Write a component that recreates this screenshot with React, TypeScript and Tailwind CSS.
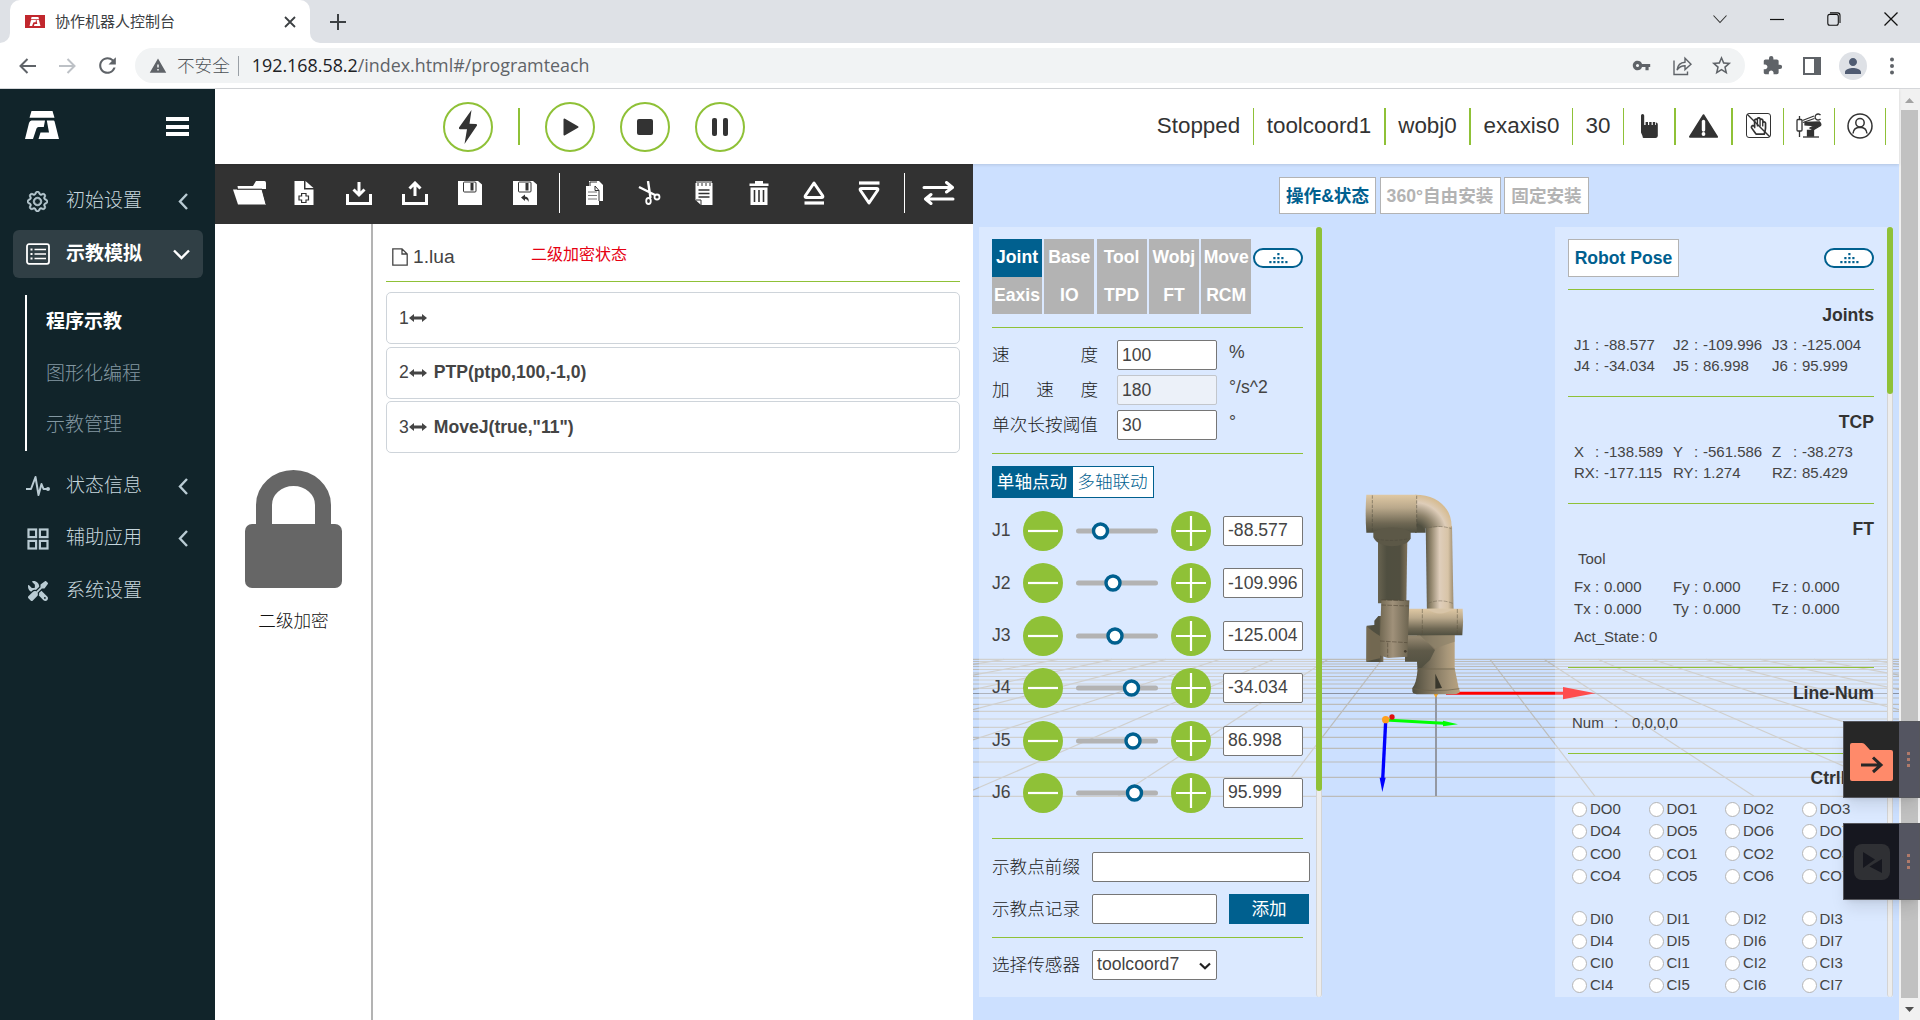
import React from "react";
import { MdVpnKey, MdStarBorder, MdExtension, MdPerson, MdWarning, MdRefresh } from "react-icons/md";
import { BsGear } from "react-icons/bs";
import { FaScrewdriverWrench } from "react-icons/fa6";
import { FaRegHandPaper } from "react-icons/fa";

const GREEN = "#8fc137";

function Logo({ className }: { className?: string }) {
  return (
    <svg viewBox="0 0 34 28" className={className} fill="currentColor">
      <path d="M6.5 0H27.5L29.500 6.800H4.500Z" />
      <path d="M6.500 9.500H20L18.800 16H13.500Q12 16 11.500 17.500L8 28H0L4 12Q4.800 9.500 6.500 9.500Z" />
      <path d="M21.800 9.500H28.500Q29.300 9.500 29.600 10.500L34 28H13.500L15.500 21.500H24Z" />
    </svg>
  );
}

function BrowserChrome() {
  return (
    <div className="h-[89px] w-full shrink-0 border-b border-[#d5d7da] bg-white">
      <div className="flex h-[43px] bg-[#dee1e6]">
        <div className="flex w-[10px] items-end bg-white">
          <div className="h-[43px] w-[10px] rounded-br-[10px] bg-[#dee1e6]" />
        </div>
        <div className="w-[300px] bg-[#dee1e6]">
          <div className="flex h-[43px] items-center rounded-t-[10px] bg-white pl-[15px] pr-[14px]">
            <div className="flex h-[13px] w-5 items-center justify-center bg-[#c1272d]">
              <Logo className="h-[9px] w-3 text-white" />
            </div>
            <span className="ml-[10px] flex-1 pt-[2px] text-[15px] text-[#3c4043]">协作机器人控制台</span>
            <svg className="h-3 w-3" viewBox="0 0 12 12" stroke="#3c4043" strokeWidth="1.8">
              <path d="M1 1L11 11M11 1L1 11" />
            </svg>
          </div>
        </div>
        <div className="flex flex-1 bg-white">
          <div className="flex h-[43px] flex-1 items-center justify-between rounded-bl-[10px] bg-[#dee1e6] pl-5 pr-[22px]">
            <svg className="h-4 w-4" viewBox="0 0 16 16" stroke="#3c4043" strokeWidth="2">
              <path d="M8 0V16M0 8H16" />
            </svg>
            <div className="flex items-center gap-[43px] pb-[6px]">
              <svg className="h-[14px] w-[14px]" viewBox="0 0 14 14" fill="none" stroke="#333" strokeWidth="1.1">
                <path d="M.5 3.5L7 10.5L13.5 3.5" />
              </svg>
              <svg className="h-[14px] w-[14px]" viewBox="0 0 14 14" stroke="#111" strokeWidth="1.2">
                <path d="M0 7.5H14" />
              </svg>
              <svg className="h-[14px] w-[14px]" viewBox="0 0 14 14" fill="none" stroke="#111" strokeWidth="1.1">
                <rect x=".8" y="2.4" width="10.5" height="10.8" rx="2" />
                <path d="M3 .9H10.6Q13 .9 13 3.4V11" />
              </svg>
              <svg className="h-[14px] w-[14px]" viewBox="0 0 14 14" stroke="#111" strokeWidth="1.3">
                <path d="M.5 .5L13.5 13.5M13.5 .5L.5 13.5" />
              </svg>
            </div>
          </div>
        </div>
      </div>
      <div className="flex h-[45px] items-center">
        <div className="flex w-[135px] items-center pl-[19px]">
          <svg className="h-4 w-[17px]" viewBox="0 0 17 16" fill="none" stroke="#5f6368" strokeWidth="2">
            <path d="M17 8H2M8.5 1L1.5 8L8.5 15" />
          </svg>
          <svg className="ml-[23px] h-4 w-[17px]" viewBox="0 0 17 16" fill="none" stroke="#bdc1c6" strokeWidth="2">
            <path d="M0 8H15M8.5 1L15.5 8L8.5 15" />
          </svg>
          <MdRefresh className="ml-[19px] h-[25px] w-[25px] text-[#5f6368]" />
        </div>
        <div className="flex h-[35px] w-[1610px] items-center rounded-full bg-[#f1f3f4] pl-[14px] pr-3 text-[#5f6368]">
          <MdWarning className="h-[18px] w-[18px]" />
          <span className="ml-[10px] pt-px text-[17.6px] font-light text-[#4d5156]">不安全</span>
          <span className="ml-2 h-5 w-px bg-[#9aa0a6]" />
          <span className="ml-[13px] flex-1 font-['Open_Sans'] text-[17.86px] text-[#5f6368]">
            <span className="text-[#202124]">192.168.58.2</span>/index.html#/programteach
          </span>
          <MdVpnKey className="h-[19px] w-[19px]" />
          <svg className="ml-[21px] h-5 w-5" viewBox="0 0 20 20" fill="none" stroke="currentColor" strokeWidth="1.4">
            <path d="M2 4.5V18.5H15.5V15.5" />
            <path d="M5 14Q6 6.5 13 6.2V2.2L19 8.2L13 13.6V9.8Q8 9.8 5 14Z" />
          </svg>
          <MdStarBorder className="ml-[18px] h-[23px] w-[23px]" />
        </div>
        <div className="ml-[17px] flex items-center text-[#5f6368]">
          <MdExtension className="h-[21px] w-[21px]" />
          <svg className="ml-5 h-[18px] w-[18px]" viewBox="0 0 18 18" fill="none" stroke="currentColor" strokeWidth="2">
            <rect x="1" y="1" width="16" height="16" />
            <rect x="12" y="1" width="5" height="16" fill="currentColor" />
          </svg>
          <div className="ml-[18px] flex h-7 w-7 items-center justify-center rounded-full bg-[#dee1e6] text-[#4f5b72]">
            <MdPerson className="h-6 w-6" />
          </div>
          <svg className="ml-[23px] h-[18px] w-1" viewBox="0 0 4 18" fill="currentColor">
            <circle cx="2" cy="2.5" r="2" />
            <circle cx="2" cy="9" r="2" />
            <circle cx="2" cy="15.5" r="2" />
          </svg>
        </div>
      </div>
    </div>
  );
}

function Chevron({ open = false }: { open?: boolean }) {
  return open ? (
    <svg className="h-[11px] w-[17px]" viewBox="0 0 17 11" fill="none" stroke="#fff" strokeWidth="2.4">
      <path d="M1 1.5L8.5 9L16 1.5" />
    </svg>
  ) : (
    <svg className="mr-[3px] h-[17px] w-[10px]" viewBox="0 0 10 17" fill="none" stroke="#b9cbd3" strokeWidth="2.4">
      <path d="M9 1L2 8.5L9 16" />
    </svg>
  );
}

function NavRow({ icon, label, chevron = true }: { icon: React.ReactNode; label: string; chevron?: boolean }) {
  return (
    <div className="flex h-12 items-center pl-[13px] pr-[12px] text-[#b9cbd3]">
      <span className="flex w-[24px] justify-center">{icon}</span>
      <span className="ml-[16px] flex-1 text-[19px] font-light text-[#c6d6dd]">{label}</span>
      {chevron && <Chevron />}
    </div>
  );
}

function Sidebar() {
  return (
    <aside className="w-[215px] shrink-0 bg-[#11242a] pl-[13px] pr-3">
      <div className="flex h-[75px] items-center justify-between pl-3 pr-[14px] text-white">
        <Logo className="mb-[3px] h-7 w-[34px]" />
        <div className="flex h-[19px] w-[23px] flex-col justify-between">
          <span className="h-1 bg-white" />
          <span className="h-1 bg-white" />
          <span className="h-1 bg-white" />
        </div>
      </div>
      <div className="mt-[13px]">
        <NavRow icon={<BsGear className="mr-[2px] h-[21px] w-[21px]" strokeWidth={0.6} />} label="初始设置" />
      </div>
      <div className="mt-[5px] flex h-12 items-center rounded-[6px] bg-[#303f45] pl-[13px] pr-[13px] text-white">
        <svg className="h-[22px] w-6" viewBox="0 0 24 22" fill="none" stroke="#fff" strokeWidth="1.8">
          <rect x="1" y="1.2" width="22" height="19.6" rx="2" />
          <path d="M8.5 6.5H20M8.5 11H20M8.5 15.5H20" strokeWidth="1.4" />
          <path d="M4.5 6.5H6.5M4.5 11H6.5M4.5 15.5H6.5" strokeWidth="2" />
        </svg>
        <span className="ml-[16px] flex-1 pt-px text-[19px] font-bold">示教模拟</span>
        <Chevron open />
      </div>
      <div className="ml-3 mt-[17px] flex h-[156px] flex-col border-l-2 border-white pl-[19px] pt-[2px] text-[19px] font-light text-[#8398a2]">
        <span className="flex h-[51px] items-center font-bold text-white">程序示教</span>
        <span className="flex h-[52px] items-center">图形化编程</span>
        <span className="flex h-[51px] items-center">示教管理</span>
      </div>
      <div className="mt-[11px] flex flex-col gap-[4.5px]">
        <NavRow
          icon={
            <svg className="h-[22px] w-6" viewBox="0 0 24 22" fill="none" stroke="currentColor" strokeWidth="2">
              <path d="M0 14H5L9.5 2L12.5 20L15.5 9L17.5 14H21" strokeLinejoin="round" />
              <circle cx="22" cy="14" r="1" />
            </svg>
          }
          label="状态信息"
        />
        <NavRow
          icon={
            <svg className="h-[22px] w-[22px]" viewBox="0 0 22 22" fill="none" stroke="currentColor" strokeWidth="2.2">
              <rect x="1.5" y="1.5" width="7.6" height="7.6" />
              <rect x="12.9" y="1.5" width="7.6" height="7.6" />
              <rect x="1.5" y="12.9" width="7.6" height="7.6" />
              <rect x="12.9" y="12.9" width="7.6" height="7.6" />
            </svg>
          }
          label="辅助应用"
        />
        <NavRow
          icon={<FaScrewdriverWrench className="h-[20px] w-[20px] -scale-x-100" />}
          label="系统设置"
          chevron={false}
        />
      </div>
    </aside>
  );
}

function RoundButton({ children }: { children: React.ReactNode }) {
  return (
    <div className="flex h-[50px] w-[50px] items-center justify-center rounded-full border-2 border-[#8fc137]">
      {children}
    </div>
  );
}

function StatusCell({ width, wide = false, children }: { width: string; wide?: boolean; children: React.ReactNode }) {
  return (
    <div
      className={`${width} flex h-[37px] shrink-0 items-center justify-center border-[#8fc137] pb-[2px] ${wide ? "border-r-2" : "border-r"}`}
    >
      {children}
    </div>
  );
}

function TopBar() {
  return (
    <header className="z-10 flex h-[75px] shrink-0 items-center justify-between bg-white pl-[228px] pr-[13px] shadow-[0_1px_3px_rgba(0,0,0,0.12)]">
      <div className="flex items-center">
        <RoundButton>
          <svg className="h-[34px] w-5" viewBox="0 0 20 34" fill="#333">
            <path d="M13.5 0L1 17.5Q.5 19 2 19.2L9 19.3L6.5 34L19 15.5Q19.5 14.2 18 14L11.5 13.8Z" />
          </svg>
        </RoundButton>
        <span className="ml-[25px] mr-[25px] h-[37px] w-[2px] bg-[#8fc137]" />
        <RoundButton>
          <svg className="ml-[2px] h-[18px] w-4" viewBox="0 0 16 18" fill="#333" stroke="#333" strokeWidth="2" strokeLinejoin="round">
            <path d="M1.5 1.5L14.5 9L1.5 16.5Z" />
          </svg>
        </RoundButton>
        <div className="ml-[25px]">
          <RoundButton>
            <span className="h-4 w-4 rounded-[2px] bg-[#333]" />
          </RoundButton>
        </div>
        <div className="ml-[25px]">
          <RoundButton>
            <span className="h-[18px] w-[5px] rounded-[2px] bg-[#333]" />
            <span className="ml-[6px] h-[18px] w-[5px] rounded-[2px] bg-[#333]" />
          </RoundButton>
        </div>
      </div>
      <div className="flex text-[22.4px] text-[#333]">
        <StatusCell width="w-[110px]">Stopped</StatusCell>
        <StatusCell width="w-[132px]" wide>toolcoord1</StatusCell>
        <StatusCell width="w-[85px]" wide>wobj0</StatusCell>
        <StatusCell width="w-[102px]">exaxis0</StatusCell>
        <StatusCell width="w-[51px]">30</StatusCell>
        <StatusCell width="w-[52px]" wide>
          <svg className="h-6 w-[17px]" viewBox="0 0 17 24" fill="#333">
            <path d="M0 1.500Q0 0 1.600 0Q3.200 0 3.200 1.500V11H4.600V8H7V11H8.200V8H10.600V11H11.800V8H14.200V11H15V8.500Q16.800 8.500 16.800 10.500V22Q16.500 24 14.500 24H2.500Q1.500 24 1.500 22L0 18.500Z" />
          </svg>
        </StatusCell>
        <StatusCell width="w-[57px]" wide>
          <svg className="h-6 w-[29px]" viewBox="0 0 29 24">
            <path d="M14.5 1.2L28 22.8H1Z" fill="#333" stroke="#333" strokeWidth="2" strokeLinejoin="round" />
            <path d="M14.5 7.5V16" stroke="#fff" strokeWidth="3.4" strokeLinecap="round" />
            <circle cx="14.5" cy="20" r="1.9" fill="#fff" />
          </svg>
        </StatusCell>
        <StatusCell width="w-[51px]">
          <span className="relative flex h-[25px] w-[25px] items-center justify-center rounded-[3px] border-[1.5px] border-[#333]">
            <FaRegHandPaper className="h-[18px] w-[17px] text-[#333]" />
            <svg className="absolute inset-0 h-full w-full" viewBox="0 0 22 22" stroke="#333" strokeWidth="1.3">
              <path d="M0 0L22 22" />
            </svg>
          </span>
        </StatusCell>
        <StatusCell width="w-[51px]">
          <svg className="h-[25px] w-[26px]" viewBox="0 0 26 25" fill="none" stroke="#333" strokeWidth="1.3">
            <path d="M24.500 2.200A3 3 0 1 0 24.500 5.800" />
            <path d="M6.500 7.500L18 3M7 9.500L18.500 5.500" />
            <rect x="1" y="6.500" width="5" height="11.500" rx="1" />
            <path d="M3.500 3V6M3.500 18V24" />
            <path d="M9 9.500L23.500 9Q25.500 11 24.500 12.500L17 17L14 15L18.500 12.500L9 12Z" fill="#333" />
            <path d="M11.500 17.500H17.500V23H11.500Z" fill="#333" />
            <path d="M7 24H23" />
          </svg>
        </StatusCell>
        <StatusCell width="w-[51px]">
          <svg className="h-[26px] w-[26px]" viewBox="0 0 26 26" fill="none" stroke="#333" strokeWidth="1.5">
            <circle cx="13" cy="13" r="12" />
            <circle cx="13" cy="9.8" r="4.2" />
            <path d="M6 20.5Q6.5 14.3 13 14.2Q19.500 14.3 20 20.5" />
          </svg>
        </StatusCell>
      </div>
    </header>
  );
}

function ToolIcon({ width, children }: { width: string; children: React.ReactNode }) {
  return (
    <div className={`${width} flex shrink-0 justify-center`}>
      <svg className="h-6 w-[34px]" viewBox="0 0 34 24" fill="none">
        {children}
      </svg>
    </div>
  );
}

function ToolBar() {
  const w = "#fff";
  const d = "#323232";
  return (
    <div className="flex h-[60px] shrink-0 items-center bg-[#323232] pb-[2px] pl-[8px]">
      <ToolIcon width="w-[53px]">
        <path d="M4.500 5H20L23 0H31.500Q33 0 33 2V8H5Z" fill={w} />
        <path d="M0 8.500H29L33 23.500H5Z" fill={w} />
        <path d="M4 8.200H29L33 23" stroke={d} strokeWidth="1" />
      </ToolIcon>
      <ToolIcon width="w-[55px]">
        <path d="M7.500 0H17V8.500H26.500V24H7.500Z" fill={w} />
        <path d="M18.500 0L26.500 7H18.500Z" fill={w} />
        <path d="M14.600 12.500H19V15H21.500V19H19V21.500H14.600V19H12V15H14.600Z" fill={w} stroke={d} strokeWidth="1.200" />
      </ToolIcon>
      <ToolIcon width="w-[56px]">
        <path d="M5.500 13V22.500H28.500V13" stroke={w} strokeWidth="3" />
        <path d="M17 1V13M11.500 8.500L17 14L22.500 8.500" stroke={w} strokeWidth="3" />
      </ToolIcon>
      <ToolIcon width="w-[55px]">
        <path d="M5.500 13V22.500H28.500V13" stroke={w} strokeWidth="3" />
        <path d="M17 15V3M11.500 7.500L17 2L22.500 7.500" stroke={w} strokeWidth="3" />
      </ToolIcon>
      <ToolIcon width="w-[55px]">
        <path d="M5 0H25L29 3.500V24H5Z" fill={w} />
        <rect x="10.500" y="1" width="12.500" height="10" rx="1" stroke={d} />
        <rect x="17.500" y="2" width="3" height="7.500" fill={d} />
      </ToolIcon>
      <ToolIcon width="w-[55px]">
        <path d="M5 0H25L29 3.500V24H5Z" fill={w} />
        <rect x="10.500" y="1" width="12.500" height="10" rx="1" stroke={d} />
        <rect x="17.500" y="2" width="3" height="7.500" fill={d} />
        <path d="M13 16.500L17 13.500V15.500Q21.500 16 20.500 21Q19.500 18 17 18V20Z" fill={d} />
      </ToolIcon>
      <span className="ml-[7px] h-10 w-[1px] bg-white" />
      <ToolIcon width="w-[68px]">
        <path d="M12 0H22L26 4V20H22V24H9V5H12Z" fill={w} />
        <path d="M13 5V1H20M18 5L22 9.500V20M18 5V9.500H22" stroke={d} />
        <path d="M11 11H20M11 14.500H20M11 18H20" stroke="#777" />
      </ToolIcon>
      <ToolIcon width="w-[42px]">
        <path d="M16 0L18.500 17M7 6L23 14" stroke={w} strokeWidth="2.400" />
        <circle cx="25" cy="16" r="2.500" stroke={w} strokeWidth="1.800" />
        <ellipse cx="16.500" cy="20" rx="2.300" ry="3" stroke={w} strokeWidth="1.800" />
      </ToolIcon>
      <ToolIcon width="w-[68px]">
        <path d="M8.500 2H25.500V24H14L8.500 19Z" fill={w} />
        <path d="M11 0V5M15 0V5M19 0V5M23 0V5" stroke={w} strokeWidth="3" />
        <path d="M11 0V5M15 0V5M19 0V5M23 0V5" stroke={d} strokeWidth="1" />
        <path d="M11.500 9H22.500M11.500 12.500H22.500M11.500 16H22.500" stroke={d} strokeWidth="1.300" />
        <path d="M9 19H14V24" stroke={d} />
      </ToolIcon>
      <ToolIcon width="w-[42px]">
        <path d="M7.500 2.500H26.500V5H7.500ZM13 0H21V3H13Z" fill={w} />
        <path d="M8.500 6.500H25.500V24H8.500Z" fill={w} />
        <path d="M12.500 9V21M17 9V21M21.500 9V21" stroke={d} strokeWidth="1.600" />
      </ToolIcon>
      <ToolIcon width="w-[68px]">
        <path d="M17 2L25.500 14.500Q26.500 16.500 24.500 16.500H9.500Q7.500 16.500 8.500 14.500Z" stroke={w} strokeWidth="3" strokeLinejoin="round" />
        <path d="M7.500 22H27" stroke={w} strokeWidth="3.200" />
      </ToolIcon>
      <ToolIcon width="w-[42px]">
        <path d="M17 22L25.500 9.500Q26.500 7.500 24.500 7.500H9.500Q7.500 7.500 8.500 9.500Z" stroke={w} strokeWidth="3" strokeLinejoin="round" />
        <path d="M7 2H27.500" stroke={w} strokeWidth="3.200" />
      </ToolIcon>
      <span className="ml-[14px] h-10 w-[1px] bg-white" />
      <ToolIcon width="w-[68px]">
        <path d="M2 6.500H30M24.500 1.500L30.500 6.500L24.500 11" stroke={w} strokeWidth="3" strokeLinecap="round" strokeLinejoin="round" />
        <path d="M31 18H4M9 13.500L3.500 18L9 22.500" stroke={w} strokeWidth="3" strokeLinecap="round" strokeLinejoin="round" />
      </ToolIcon>
    </div>
  );
}

function CodeRow({ n, children }: { n: number; children?: React.ReactNode }) {
  return (
    <div className="flex h-[52px] items-center rounded-[5px] border border-[#ced4da] pl-[12px] text-[17.6px] text-[#444]">
      <span>{n}</span>
      <svg className="mr-[7px] h-2 w-[18px]" viewBox="0 0 18 8" fill="#444">
        <path d="M0 4L5 0V2.600H13V0L18 4L13 8V5.400H5V8Z" />
      </svg>
      <b>{children}</b>
    </div>
  );
}

function ProgramArea() {
  return (
    <div className="flex w-[758px] shrink-0 flex-col bg-white">
      <ToolBar />
      <div className="flex flex-1">
        <div className="flex w-[158px] flex-col items-center border-r-2 border-[#b3b3b3] pt-[246px]">
          <svg className="h-[118px] w-[97px]" viewBox="0 0 97 118">
            <path d="M19 60V35A29.500 27 0 0 1 78 35V60" fill="none" stroke="#666" strokeWidth="16" />
            <rect x="0" y="54" width="97" height="64" rx="7" fill="#666" />
          </svg>
          <span className="ml-px mt-[20px] text-[17.6px] font-light text-[#111]">二级加密</span>
        </div>
        <div className="flex-1 pl-[13px] pr-[13px]">
          <div className="flex h-[58px] items-center border-b border-[#8fc137] pt-[9px]">
            <svg className="ml-[6px] h-[18px] w-4" viewBox="0 0 16 18" fill="none" stroke="#444" strokeWidth="1.300">
              <path d="M.8 .8H10L15.200 6V17.200H.8ZM10 .8V6H15.200" />
            </svg>
            <span className="ml-[5px] w-[118px] text-[19.200px] text-[#444]">1.lua</span>
            <span className="pb-[5px] text-[16px] text-[#e60012]">二级加密状态</span>
          </div>
          <div className="mt-[10px] flex flex-col gap-[2.500px]">
            <CodeRow n={1} />
            <CodeRow n={2}>PTP(ptp0,100,-1,0)</CodeRow>
            <CodeRow n={3}>MoveJ(true,"11")</CodeRow>
          </div>
        </div>
      </div>
    </div>
  );
}

const GRID_Y = [
  659.3, 661.5, 664, 666.5, 669.5, 673, 676.5, 680, 684, 688.3, 698, 704.3, 711.3, 719, 727.3, 737.3, 748.3, 762, 777.3,
  796.3,
];
const GRID_I = [-10, -9, -8, -7, -6, -5, -4, -3, -2, -1, 1, 2, 3, 4, 5, 6, 7, 8, 9, 10];

function Scene() {
  return (
    <svg className="absolute inset-0 h-full w-full" viewBox="973 164 926 856">
      <defs>
        <linearGradient id="tubeV" x1="0" y1="0" x2="0" y2="1">
          <stop offset="0" stopColor="#e0c9a4" />
          <stop offset=".35" stopColor="#b9a88b" />
          <stop offset=".75" stopColor="#6f6854" />
          <stop offset="1" stopColor="#504f40" />
        </linearGradient>
        <linearGradient id="tubeLow" x1="0" y1="0" x2="0" y2="1">
          <stop offset="0" stopColor="#9b8d75" />
          <stop offset=".45" stopColor="#5f5a49" />
          <stop offset="1" stopColor="#504f40" />
        </linearGradient>
        <linearGradient id="tubeH" x1="0" y1="0" x2="1" y2="0">
          <stop offset="0" stopColor="#5d5948" />
          <stop offset=".2" stopColor="#93876e" />
          <stop offset=".5" stopColor="#dfcebb" />
          <stop offset=".8" stopColor="#d8c4a7" />
          <stop offset="1" stopColor="#9b8b6e" />
        </linearGradient>
        <linearGradient id="darkH" x1="0" y1="0" x2="1" y2="0">
          <stop offset="0" stopColor="#686350" />
          <stop offset=".3" stopColor="#504f40" />
          <stop offset=".75" stopColor="#514f40" />
          <stop offset="1" stopColor="#7e7159" />
        </linearGradient>
        <linearGradient id="wrist" x1="0" y1="0" x2="1" y2="0">
          <stop offset="0" stopColor="#706751" />
          <stop offset=".45" stopColor="#a0917a" />
          <stop offset="1" stopColor="#6b634f" />
        </linearGradient>
        <linearGradient id="base" x1="0" y1="0" x2="1" y2="0">
          <stop offset="0" stopColor="#4f4d3e" />
          <stop offset=".35" stopColor="#7a705b" />
          <stop offset=".8" stopColor="#a8977a" />
          <stop offset="1" stopColor="#b9a380" />
        </linearGradient>
        <radialGradient id="elbow" gradientUnits="userSpaceOnUse" cx="285" cy="222" r="118">
          <stop offset=".25" stopColor="#504f40" />
          <stop offset=".5" stopColor="#8d826b" />
          <stop offset=".8" stopColor="#decdb9" />
          <stop offset="1" stopColor="#d6bc92" />
        </radialGradient>
      </defs>
      <g stroke="#bcbcba" strokeWidth="1.200">
        {GRID_Y.map((y) => (
          <path key={y} d={`M973 ${y}H1899`} />
        ))}
        {GRID_I.map((i) => (
          <path key={i} d={`M${1436 + 54 * i} 659.300L${1436 + 159 * i} 796.300`} />
        ))}
      </g>
      <path d="M973 693.500H1899" stroke="#8b92a0" strokeWidth="1.200" />
      <path d="M1436 693V796" stroke="#9398a3" strokeWidth="2" />
      <g transform="translate(1320 460) scale(.33333)">
        <path d="M378 700H735" stroke="#f00" strokeWidth="9" />
        <path d="M729 681L826 700L729 718Z" fill="#f00" />
        <path d="M340 700H356L347 713Z" fill="#f5a623" />
        <path d="M174 235H262L259 430H174Z" fill="url(#darkH)" />
        <path d="M317 190L396 198L401 470H321Z" fill="url(#tubeH)" />
        <path d="M285 104C352 104 395 143 395 200H362L317 205V218H285Z" fill="url(#elbow)" />
        <path d="M139 104H290V218H139Q135 160 139 104Z" fill="url(#tubeV)" />
        <path d="M160 215Q215 190 272 215V236Q262 250 252 252Q216 266 182 252Q166 246 160 232Z" fill="#5c5847" />
        <path d="M168 237Q216 246 266 236M157 106V216M290 107V200" stroke="#4a463a" strokeWidth="1.500" strokeDasharray="10 4" fill="none" />
        <path d="M324 204Q360 194 394 206M324 430Q360 415 398 430" stroke="#6f6552" strokeWidth="1.500" strokeDasharray="12 4" fill="none" />
        <path d="M291 510H404V628H293Z" fill="url(#base)" />
        <path d="M255 526H300L345 570L330 600L300 628H293L291 605H255Z" fill="url(#tubeLow)" />
        <path d="M260 526H404V545L345 565L300 532H260Z" fill="#8f836b" opacity=".7" />
        <path d="M260 446H428Q431 486 427 526H260Z" fill="url(#tubeV)" />
        <path d="M320 446Q360 475 400 446Z" fill="#d8c5a8" />
        <path d="M307 447V526M412 447V526" stroke="#5a503f" strokeWidth="1.500" strokeDasharray="12 4" />
        <path d="M140 497L163 495V482L175 468H190V606H139Z" fill="url(#darkH)" />
        <path d="M139 499Q165 520 180 528V595L139 604Z" fill="#7b6e55" opacity=".8" />
        <path d="M184 420L268 422L262 590L204 594L178 586Z" fill="url(#wrist)" />
        <path d="M184 420L268 422M184 435L266 438M180 543L262 548M203 548V590" stroke="#493f2f" strokeWidth="1.500" strokeDasharray="14 4" />
        <circle cx="256" cy="574" r="4" fill="#463e30" />
        <path d="M293 625H404L416 684L420 694Q420 702 400 703H290Q277 701 277 694V684Q290 670 293 625Z" fill="url(#base)" />
        <path d="M293 627H404M277 686Q346 698 418 686" stroke="#6a604c" strokeWidth="2" fill="none" />
        <path d="M346 641L366 684L346 686Z" fill="#39372c" />
        <path d="M197 780L370 790" stroke="#0f0" strokeWidth="9" />
        <path d="M369 782L414 793L369 799Z" fill="#0f0" />
        <path d="M197 785L188 960" stroke="#00f" strokeWidth="10" />
        <path d="M179 953H197L187 996Z" fill="#00f" />
        <circle cx="216" cy="771" r="8" fill="#e01010" />
        <circle cx="197" cy="779" r="11" fill="#ffa01e" />
      </g>
    </svg>
  );
}

function Pill() {
  return (
    <div className="flex h-5 w-[50px] items-center justify-center rounded-full border-2 border-[#00608f] bg-white">
      <svg className="h-[11px] w-[19px]" viewBox="0 0 19 11" fill="#00608f">
        <rect x="8.300" y="0" width="2.200" height="2.200" />
        <rect x="4.300" y="4" width="2.200" height="2.200" />
        <rect x="8.300" y="4" width="2.200" height="2.200" />
        <rect x="12.300" y="4" width="2.200" height="2.200" />
        <rect x=".3" y="8" width="2.200" height="2.200" />
        <rect x="4.300" y="8" width="2.200" height="2.200" />
        <rect x="8.300" y="8" width="2.200" height="2.200" />
        <rect x="12.300" y="8" width="2.200" height="2.200" />
        <rect x="16.300" y="8" width="2.200" height="2.200" />
      </svg>
    </div>
  );
}

const TABS = ["Joint", "Base", "Tool", "Wobj", "Move", "Eaxis", "IO", "TPD", "FT", "RCM"];

const JOINTS = [
  { name: "J1", value: "-88.577", at: 24.5 },
  { name: "J2", value: "-109.996", at: 37 },
  { name: "J3", value: "-125.004", at: 39 },
  { name: "J4", value: "-34.034", at: 55.5 },
  { name: "J5", value: "86.998", at: 57 },
  { name: "J6", value: "95.999", at: 58.5 },
];

const FIELD = "flex h-[30px] items-center rounded-[2px] border border-[#767676] bg-white pl-1 text-[17.6px] text-[#444]";

function ParamRow({ label, value, unit, disabled = false }: { label: string; value: string; unit: string; disabled?: boolean }) {
  return (
    <div className="flex h-[30px] items-center">
      <div className="flex w-[106px] justify-between font-light text-[#222]">
        {[...label].map((c, i) => (
          <span key={i}>{c}</span>
        ))}
      </div>
      <div
        className={`ml-[19px] flex h-[30px] w-[100px] items-center rounded-[2px] border pl-1 ${disabled ? "border-[#c2c6cc] bg-[#ecf1f9]" : "border-[#767676] bg-white"}`}
      >
        {value}
      </div>
      <span className="ml-[12px] pb-[5px]">{unit}</span>
    </div>
  );
}

function CircleButton({ plus = false }: { plus?: boolean }) {
  return (
    <svg className="h-10 w-10" viewBox="0 0 40 40">
      <circle cx="20" cy="20" r="20" fill={GREEN} />
      <path d={plus ? "M5 20H35M20 5V35" : "M5 20H35"} stroke="#fff" strokeWidth="2.200" />
    </svg>
  );
}

function Rule({ className = "" }: { className?: string }) {
  return <div className={`h-px bg-[#8fc137] ${className}`} />;
}

function OperatePanel() {
  return (
    <section className="flex h-[770px] w-[343px] justify-between bg-white/30 text-[17.6px] text-[#444]">
      <div className="ml-[13px] w-[311px] pt-3">
        <div className="flex justify-between">
          <div className="grid grid-cols-[repeat(5,50px)] gap-x-[2.3px]">
            {TABS.map((t, i) => (
              <div
                key={t}
                className={`flex items-center justify-center font-bold text-white ${i < 5 ? "h-[38px] pb-[2px]" : "h-[37px]"} ${i === 0 ? "bg-[#00608f]" : "bg-[#b3b3b3]"}`}
              >
                {t}
              </div>
            ))}
          </div>
          <div className="pt-[9px]">
            <Pill />
          </div>
        </div>
        <Rule className="mt-[13px]" />
        <div className="mt-3 flex flex-col gap-[5px]">
          <ParamRow label="速度" value="100" unit="%" />
          <ParamRow label="加速度" value="180" unit="°/s^2" disabled />
          <ParamRow label="单次长按阈值" value="30" unit="°" />
        </div>
        <Rule className="mt-[13px]" />
        <div className="mt-3 flex h-8 w-[162px] border border-[#00608f] bg-white">
          <span className="flex w-20 items-center justify-center bg-[#00608f] pr-[2px] text-white">单轴点动</span>
          <span className="flex w-20 items-center justify-center pr-[1px] font-light text-[#00608f]">多轴联动</span>
        </div>
        <div className="mt-[13px] flex flex-col gap-[12.400px]">
          {JOINTS.map((j) => (
            <div key={j.name} className="flex h-10 items-center">
              <span className="w-[31px] pb-[1px]">{j.name}</span>
              <CircleButton />
              <svg className="ml-[13px] h-[18px] w-[82px]" viewBox="0 0 82 18">
                <rect x="0" y="6.500" width="82" height="5" rx="2.500" fill="#b3b3b3" />
                <circle cx={j.at} cy="9" r="7" fill="#fff" stroke="#00608f" strokeWidth="3.400" />
              </svg>
              <span className="ml-[13px]">
                <CircleButton plus />
              </span>
              <div className={`${FIELD} ml-3 w-20 pb-px`}>{j.value}</div>
            </div>
          ))}
        </div>
        <Rule className="mt-[25px]" />
        <div className="mt-[13px] flex items-center">
          <span className="w-[100px] shrink-0 font-light text-[#222]">示教点前缀</span>
          <div className={`${FIELD} w-[218px] shrink-0`} />
        </div>
        <div className="mt-3 flex items-center">
          <span className="w-[100px] shrink-0 font-light text-[#222]">示教点记录</span>
          <div className={`${FIELD} w-[125px] shrink-0`} />
          <div className="ml-3 flex h-[30px] w-20 shrink-0 items-center justify-center bg-[#00608f] text-white">添加</div>
        </div>
        <Rule className="mt-[13px]" />
        <div className="mt-3 flex items-center">
          <span className="w-[100px] shrink-0 font-light text-[#222]">选择传感器</span>
          <div className={`${FIELD} w-[125px] shrink-0 justify-between pr-[5px]`}>
            <span className="pb-px">toolcoord7</span>
            <svg className="mt-[2px] h-[8px] w-[12px]" viewBox="0 0 12 8" fill="none" stroke="#222" strokeWidth="2.200">
              <path d="M1 1.500L6 6.300L11 1.500" />
            </svg>
          </div>
        </div>
      </div>
      <div className="w-[6px] rounded-[3px] border-x border-[#d4d4d4] bg-[#ededed]">
        <div className="-mx-px h-[564px] rounded-[3px] bg-[#8fc137]" />
      </div>
    </section>
  );
}

function PoseRow({ cells, h = "h-[21px]" }: { cells: string[][]; h?: string }) {
  return (
    <div className={`${h} ml-[6px] flex items-center`}>
      {cells.map(([k, v]) => (
        <div key={k} className="flex w-[99px] shrink-0">
          <span className="w-[21px]">{k}</span>
          <span className="w-[9px]">:</span>
          <span>{v}</span>
        </div>
      ))}
    </div>
  );
}

function Heading({ children }: { children: string }) {
  return <h3 className="flex h-[30px] items-center justify-end text-[17.6px] font-bold text-[#333]">{children}</h3>;
}

function IoRow({ names }: { names: string[] }) {
  return (
    <div className="flex h-[22.300px] items-center">
      {names.map((n) => (
        <div key={n} className="flex w-[76.500px] shrink-0 items-center">
          <span className="h-[15px] w-[15px] rounded-full border border-[#b5b5b5] bg-white" />
          <span className="ml-[3px]">{n}</span>
        </div>
      ))}
    </div>
  );
}

function StatePanel() {
  return (
    <section className="flex h-[770px] w-[338px] justify-between bg-white/30 text-[15px] text-[#444]">
      <div className="ml-[13px] w-[306px] pt-3">
        <div className="flex items-start justify-between">
          <div className="flex h-[38px] w-[111px] items-center justify-center border border-[#b3b3b3] bg-white text-[17.6px] font-bold text-[#00608f]">
            Robot Pose
          </div>
          <div className="pt-[9px]">
            <Pill />
          </div>
        </div>
        <Rule className="mt-3" />
        <div className="h-[106px] pt-[10px]">
          <Heading>Joints</Heading>
          <div className="mt-[5px]">
            <PoseRow cells={[["J1", "-88.577"], ["J2", "-109.996"], ["J3", "-125.004"]]} />
            <PoseRow cells={[["J4", "-34.034"], ["J5", "86.998"], ["J6", "95.999"]]} />
          </div>
        </div>
        <Rule />
        <div className="h-[106px] pt-[10px]">
          <Heading>TCP</Heading>
          <div className="mt-[5px]">
            <PoseRow cells={[["X", "-138.589"], ["Y", "-561.586"], ["Z", "-38.273"]]} />
            <PoseRow cells={[["RX", "-177.115"], ["RY", "1.274"], ["RZ", "85.429"]]} />
          </div>
        </div>
        <Rule />
        <div className="h-[163px] pt-[10px]">
          <Heading>FT</Heading>
          <div className="ml-[10px] flex h-[30px] items-center">Tool</div>
          <div className="mt-[2px]">
            <PoseRow h="h-[22px]" cells={[["Fx", "0.000"], ["Fy", "0.000"], ["Fz", "0.000"]]} />
            <PoseRow h="h-[22px]" cells={[["Tx", "0.000"], ["Ty", "0.000"], ["Tz", "0.000"]]} />
          </div>
          <div className="ml-[6px] mt-[5px] flex h-[24px] items-center">
            <span className="w-[67px]">Act_State</span>
            <span className="w-[8px]">:</span>
            <span>0</span>
          </div>
        </div>
        <Rule />
        <div className="h-[85px] pt-[10px]">
          <Heading>Line-Num</Heading>
          <div className="ml-[4px] flex h-[30px] items-center">
            <span className="w-[42px]">Num</span>
            <span className="w-[18px]">:</span>
            <span>0,0,0,0</span>
          </div>
        </div>
        <Rule />
        <div className="pt-[9px]">
          <Heading>CtrlBox</Heading>
          <div className="ml-1 mt-[5px]">
            <IoRow names={["DO0", "DO1", "DO2", "DO3"]} />
            <IoRow names={["DO4", "DO5", "DO6", "DO7"]} />
            <IoRow names={["CO0", "CO1", "CO2", "CO3"]} />
            <IoRow names={["CO4", "CO5", "CO6", "CO7"]} />
          </div>
          <div className="ml-1 mt-[20.500px]">
            <IoRow names={["DI0", "DI1", "DI2", "DI3"]} />
            <IoRow names={["DI4", "DI5", "DI6", "DI7"]} />
            <IoRow names={["CI0", "CI1", "CI2", "CI3"]} />
            <IoRow names={["CI4", "CI5", "CI6", "CI7"]} />
          </div>
        </div>
      </div>
      <div className="w-[6px] rounded-[3px] border-x border-[#d4d4d4] bg-[#ededed]">
        <div className="-mx-px h-[167px] rounded-[3px] bg-[#8fc137]" />
      </div>
    </section>
  );
}

function SimulationArea() {
  return (
    <div className="relative flex-1 bg-[#cce0ff]">
      <Scene />
      <div className="relative">
        <div className="flex h-[63px] gap-[3.500px] pl-[306px] pt-[13px] text-[17.6px] font-bold">
          <div className="flex h-[37px] w-[97px] items-center justify-center border border-[#b3b3b3] bg-white pt-px text-[#00608f]">
            操作&amp;状态
          </div>
          <div className="flex h-[37px] w-[121px] items-center justify-center whitespace-nowrap border border-[#b3b3b3] bg-white pt-px text-[#b3b3b3]">
            360°自由安装
          </div>
          <div className="flex h-[37px] w-[85px] items-center justify-center border border-[#b3b3b3] bg-white pt-px text-[#b3b3b3]">
            固定安装
          </div>
        </div>
        <div className="flex justify-between pl-[6px] pr-[6px]">
          <OperatePanel />
          <StatePanel />
        </div>
      </div>
    </div>
  );
}

function FloatingWidgets() {
  return (
    <div className="absolute right-0 top-[721px] z-20 flex flex-col gap-[25px]">
      <div className="flex h-[77px] w-[77px] border border-[#55565c] bg-[#272727] shadow-lg">
        <div className="flex w-[55px] items-center justify-center pt-1">
          <svg className="h-[38px] w-[43px]" viewBox="0 0 43 38">
            <path d="M2 0H12Q14 0 15.500 2L20 7H41Q43 7 43 9V36Q43 38 41 38H2Q0 38 0 36V2Q0 0 2 0Z" fill="#ff8a6a" />
            <path d="M11 22H31M23 14.500L31 22L23 29" fill="none" stroke="#272727" strokeWidth="3" />
          </svg>
        </div>
        <DotHandle />
      </div>
      <div className="flex h-[77px] w-[77px] border border-[#55565c] bg-[#16171f] shadow-lg">
        <div className="flex w-[55px] items-center justify-center">
          <svg className="h-9 w-9" viewBox="0 0 36 36">
            <rect width="36" height="36" rx="8" fill="#2f3034" />
            <path d="M9 8L21 15.500L9 24Z" fill="#16171f" />
            <path d="M28 15V29L15.500 22.500Z" fill="#16171f" />
          </svg>
        </div>
        <DotHandle />
      </div>
    </div>
  );
}

function DotHandle() {
  return (
    <div className="flex flex-1 flex-col items-center justify-center gap-[3px] bg-[#545561] pr-[2px]">
      <span className="h-[3px] w-[3px] bg-[#b07a6a]" />
      <span className="h-[3px] w-[3px] bg-[#b07a6a]" />
      <span className="h-[3px] w-[3px] bg-[#b07a6a]" />
    </div>
  );
}

export default function App() {
  return (
    <div className="relative flex h-[1020px] w-[1920px] flex-col overflow-hidden bg-white font-['Liberation_Sans','Noto_Sans_CJK_SC',sans-serif] leading-normal">
      <BrowserChrome />
      <div className="flex flex-1">
        <Sidebar />
        <main className="flex flex-1 flex-col">
          <TopBar />
          <div className="flex flex-1">
            <ProgramArea />
            <SimulationArea />
          </div>
        </main>
        <div className="flex w-[21px] flex-col items-center justify-between bg-[#f1f1f1]">
          <svg className="mt-[9px] h-[5px] w-[9px]" viewBox="0 0 9 5" fill="#a3a3a3">
            <path d="M0 5L4.500 0L9 5Z" />
          </svg>
          <div className="mb-[9px] mt-[7px] w-[17px] flex-1 bg-[#c1c1c1]" />
          <svg className="mb-[8px] h-[5px] w-[9px]" viewBox="0 0 9 5" fill="#505050">
            <path d="M0 0L4.500 5L9 0Z" />
          </svg>
        </div>
      </div>
      <FloatingWidgets />
    </div>
  );
}
